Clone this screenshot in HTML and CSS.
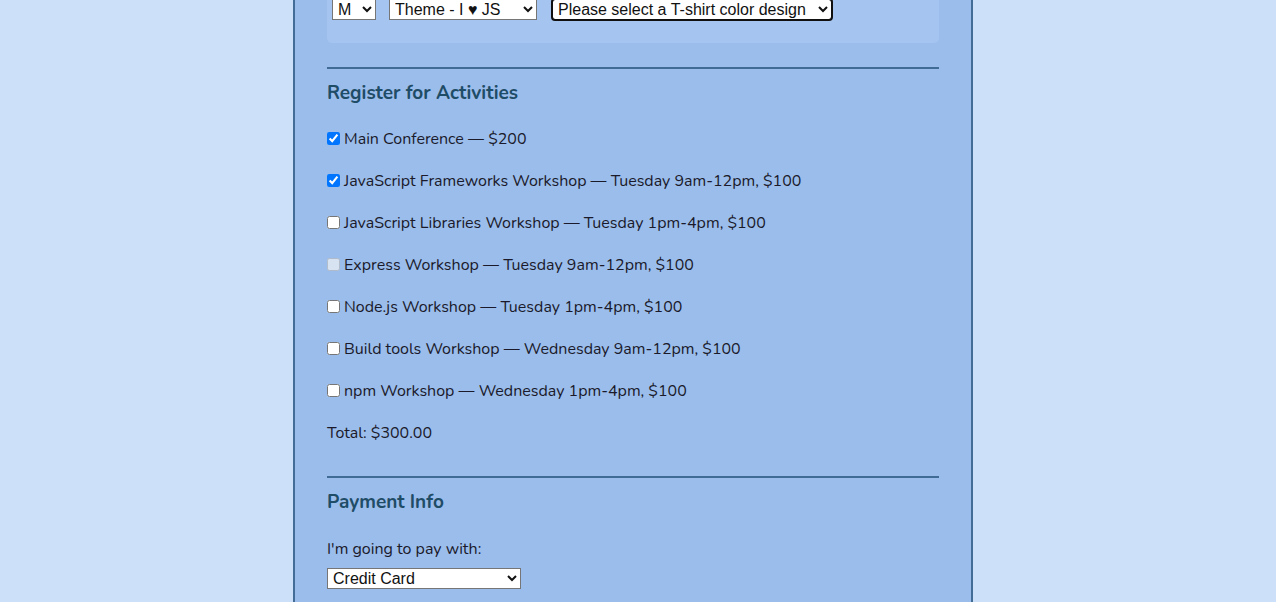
FILE: index.html
```html
<!DOCTYPE html>
<html lang="en">
<head>
<meta charset="utf-8">
<title>Registration</title>
<link rel="stylesheet" href="styles.css">
</head>
<body>
<div class="page">
  <form class="container">
    <div class="shirt-box">
      <div class="shirt-row">
        <select class="sel sel-size"><option>M</option></select>
        <select class="sel sel-design"><option>Theme - I ♥ JS</option></select>
        <select class="sel sel-color focused"><option>Please select a T-shirt color design</option></select>
      </div>
    </div>
    <hr class="rule rule-first">
    <section class="activities">
      <h2 class="heading">Register for Activities</h2>
      <label class="act"><input type="checkbox" checked> Main Conference — $200</label>
      <label class="act"><input type="checkbox" checked> JavaScript Frameworks Workshop — Tuesday 9am-12pm, $100</label>
      <label class="act"><input type="checkbox"> JavaScript Libraries Workshop — Tuesday 1pm-4pm, $100</label>
      <label class="act disabled"><input type="checkbox" disabled> Express Workshop — Tuesday 9am-12pm, $100</label>
      <label class="act"><input type="checkbox"> Node.js Workshop — Tuesday 1pm-4pm, $100</label>
      <label class="act"><input type="checkbox"> Build tools Workshop — Wednesday 9am-12pm, $100</label>
      <label class="act"><input type="checkbox"> npm Workshop — Wednesday 1pm-4pm, $100</label>
      <p class="total">Total: $300.00</p>
    </section>
    <hr class="rule">
    <section class="payment">
      <h2 class="heading">Payment Info</h2>
      <p class="pay-label">I'm going to pay with:</p>
      <select class="sel sel-pay"><option>Credit Card</option></select>
    </section>
  </form>
</div>
</body>
</html>
```
FILE: styles.css
```css
html, body {
  margin: 0;
  padding: 0;
  background: #cce0fa;
  height: 100%;
  overflow: hidden;
}
body {
  font-family: "Nunito", "Lato", "Noto Sans", sans-serif;
  color: #1a1a2a;
  font-size: 16px;
}
.page {
  display: flex;
  justify-content: center;
  padding-right: 10px;
  min-height: 602px;
}
.container {
  width: 612px;
  padding: 0 32px;
  background: #9bbdec;
  border-left: 2px solid #436d96;
  border-right: 2px solid #436d96;
  min-height: 602px;
}
.shirt-box {
  background: #a5c4f0;
  border-radius: 0 0 5px 5px;
  height: 43px;
}
.shirt-row {
  display: flex;
  align-items: flex-start;
  padding-left: 5px;
  position: relative;
  top: -1px;
}
.sel {
  font-family: "Liberation Sans", Arial, sans-serif;
  font-size: 16px;
  height: 21px;
  border: 1px solid #767676;
  background: #fff;
  color: #111;
  padding: 0 0 0 1px;
  border-radius: 0;
}
.sel-size { width: 44px; }
.sel-design { width: 148px; margin-left: 13px; }
.sel-color { width: 280px; margin-left: 15px; }
.focused {
  outline: 2px solid #101010;
  outline-offset: -1px;
  border-radius: 3px;
}
.rule {
  border: 0;
  height: 2px;
  background: #3f6b94;
  margin: 0;
}
.rule-first { margin-top: 24px; }
.heading {
  font-size: 19px;
  font-weight: 700;
  color: #1f4c66;
  margin: 1px 0 0;
  height: 48px;
  line-height: 46px;
}
.act {
  display: flex;
  align-items: center;
  height: 42px;
  line-height: 42px;
}
.act input {
  margin: 0 4px 0 0;
  width: 13px;
  height: 13px;
  position: relative;
  top: -1px;
}
.total {
  margin: 0 0 22px;
  height: 42px;
  line-height: 42px;
}
.payment .heading {
  margin-top: 1px;
  height: 46px;
}
.pay-label {
  margin: 0;
  height: 43px;
  line-height: 48px;
}
.sel-pay { width: 194px; }
```
